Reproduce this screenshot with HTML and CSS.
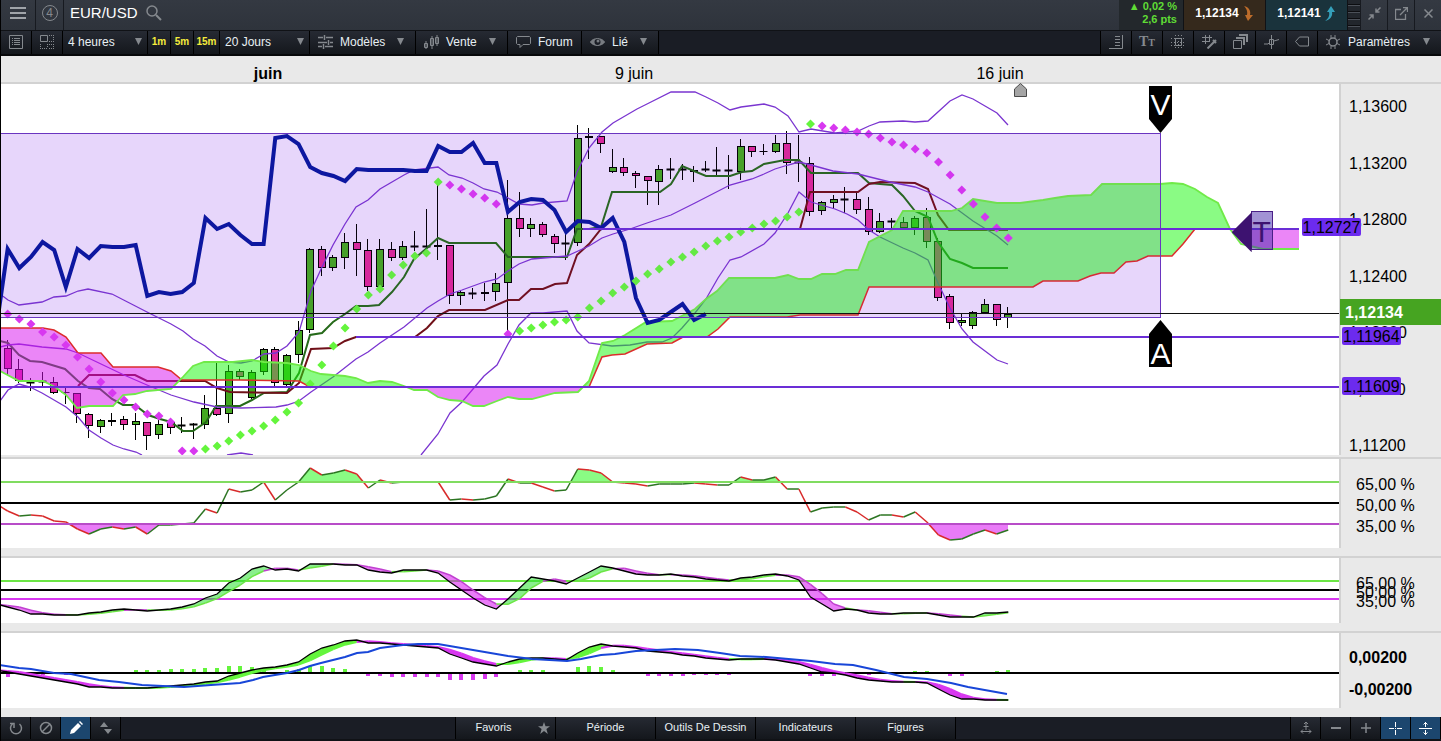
FILE: index.html
```html
<!doctype html>
<html lang="fr">
  <head>
    <meta charset="utf-8" />
    <meta name="viewport" content="width=device-width,initial-scale=1.0" />
    <title>EUR/USD</title>
    <link rel="stylesheet" href="styles.css">
  </head>
  <body>
    <header class="titlebar">
      <button class="tb-btn menu" aria-label="Menu">
        <svg width="16" height="12" viewBox="0 0 16 12"><path d="M0 1h16M0 6h16M0 11h16" stroke-width="2"/></svg>
      </button>
      <button class="tb-btn badge-btn" aria-label="Groupe 4"><span class="badge">4</span></button>
      <h1>EUR/USD</h1>
      <button class="search" aria-label="Rechercher">
        <svg width="16" height="16" viewBox="0 0 16 16"><circle cx="6" cy="6" r="5" stroke-width="1.5"/><path d="M10 10l5 5" stroke-width="2"/></svg>
      </button>
      <div class="change"><span>▲ 0,02 %</span><span>2,6 pts</span></div>
      <button class="quote sell">1,12134
        <svg width="11" height="15" viewBox="0 0 11 15"><path d="M1 0c5 1 7 5 6 9h3l-5 6-3-6h2c1-4-1-7-3-9z"/></svg>
      </button>
      <button class="quote buy">1,12141
        <svg width="11" height="15" viewBox="0 0 11 15"><path d="M0 15c5-1 8-5 7-9h3l-4-6-4 6h2c1 4-1 7-4 9z"/></svg>
      </button>
      <div class="grip"></div>
      <button class="tb-btn" aria-label="Réduire">
        <svg width="13" height="13" viewBox="0 0 13 13"><path d="M12.5 0.5L8 5M8 1.5V5h3.5M0.5 12.5L5 8M1.5 8H5v3.5" stroke-width="1.5"/></svg>
      </button>
      <button class="tb-btn" aria-label="Détacher">
        <svg width="13" height="13" viewBox="0 0 13 13"><path d="M6 2.5H0.5v10h10V7M5 8l7-7M8 0.5h4.5V5" stroke-width="1.3"/></svg>
      </button>
      <button class="tb-btn" aria-label="Fermer">
        <svg width="9" height="9" viewBox="0 0 9 9"><path d="M0.5 0.5l8 8M8.5 0.5l-8 8" stroke-width="1.5"/></svg>
      </button>
    </header>

    <nav class="toolbar">
      <button class="tool" aria-label="Liste">
        <svg width="14" height="14" viewBox="0 0 14 14"><path d="M0.5 0.5h13v13H0.5zM3 3.5h1M5 3.5h6M3 5.5h1M5 5.5h6M3 7.5h1M5 7.5h6M3 9.5h1M5 9.5h6"/></svg>
      </button>
      <button class="tool" aria-label="Disposition">
        <svg width="14" height="14" viewBox="0 0 14 14"><path d="M0.5 0.5h7v6h-7z"/><path d="M9 0.5h5M13.5 2v5M9 6.5h4M0.5 9v5M2 13.5h5M7.5 9v4M9 13.5h5M13.5 9v4M9 9.5h3" stroke-dasharray="1 1"/></svg>
      </button>
      <div class="drop unit">
        <select aria-label="Unité de temps"><option>4 heures</option></select>
        <i class="arrow"></i>
      </div>
      <button class="quick">1m</button>
      <button class="quick">5m</button>
      <button class="quick last">15m</button>
      <div class="drop range">
        <select aria-label="Période affichée"><option>20 Jours</option></select>
        <i class="arrow"></i>
      </div>
      <button class="item models">
        <svg width="15" height="14" viewBox="0 0 15 14"><path d="M0 2.5h5M8 2.5h7M0 7.5h9M12 7.5h3M0 11.5h4M7 11.5h8M6.5 0v5M10.5 5v5M5.5 9v5" stroke-width="1.5"/></svg>
        Modèles<i class="arrow"></i>
      </button>
      <button class="item sale">
        <svg width="15" height="14" viewBox="0 0 15 14"><path d="M0.5 8.5h3v4h-3zM2 6v8M6.5 3.5h3v7h-3zM8 1v13M11.5 2.5h3v6h-3zM13 0v11"/></svg>
        Vente<i class="arrow"></i>
      </button>
      <button class="item forum">
        <svg width="15" height="12" viewBox="0 0 15 12"><path d="M1.5 0.5h12l1 1v6l-1 1H7L4 11.5v-3H1.5l-1-1v-6z"/></svg>
        Forum
      </button>
      <button class="item linked">
        <svg width="15" height="10" viewBox="0 0 15 10"><path d="M0.5 5C3 0.5 12 0.5 14.5 5 12 9.5 3 9.5 0.5 5z" fill="#777b80"/><circle cx="7.5" cy="5" r="3" fill="#1a1d25" stroke="none"/><circle cx="8" cy="4" r="1.5" fill="#777b80" stroke="none"/></svg>
        Lié<i class="arrow"></i>
      </button>
      <span class="spacer"></span>
      <button class="tool" aria-label="Échelle">
        <svg width="14" height="14" viewBox="0 0 14 14"><path d="M13.5 0v13.5H0M6 1.5h5M6 4.5h5M6 7.5h5M6 10.5h5"/></svg>
      </button>
      <button class="tool glyph" aria-label="Texte">T<small>T</small></button>
      <button class="tool" aria-label="Grille">
        <svg width="15" height="14" viewBox="0 0 15 14"><path d="M4.5 0v14M10.5 0v14M0 3.5h15M0 10.5h15M7.5 0v14M0 7.5h15" stroke-dasharray="1 2"/><path d="M4.5 3.5h6v7h-6z"/></svg>
      </button>
      <button class="tool" aria-label="Couleurs de grille">
        <svg width="15" height="14" viewBox="0 0 15 14"><path d="M3.5 0v9M7.5 0v7M0 2.5h10M0 6.5h8"/><path d="M14 5l-5 5M11 5l3 3M5.500 13.500l4-4" stroke-width="2"/></svg>
      </button>
      <button class="tool" aria-label="Calques">
        <svg width="15" height="15" viewBox="0 0 15 15"><path d="M0.5 6.5h8v8h-8z"/><path d="M3 4h8v7M6 1h8v7" stroke-width="2"/></svg>
      </button>
      <button class="tool" aria-label="Bougie">
        <svg width="15" height="14" viewBox="0 0 15 14"><path d="M5.5 4.5h4v5h-4zM7.5 0v14M0 9h4l2-2M10 6l5-1.5"/></svg>
      </button>
      <button class="tool" aria-label="Étiquette">
        <svg width="14" height="12" viewBox="0 0 14 12"><path d="M4.5 1h9v9h-9L0.5 5.5z"/></svg>
      </button>
      <button class="item settings">
        <svg width="14" height="14" viewBox="0 0 14 14"><circle cx="7" cy="7" r="4" stroke-width="1.5"/><path d="M5 0v3M9 0v3M5 11v3M9 11v3M0 4l3 1.5M0 10l3-1.5M14 4l-3 1.5M14 10l-3-1.5"/></svg>
        Paramètres<i class="arrow"></i>
      </button>
    </nav>

    <main>
      <div class="time-axis">
        <span class="tick"><b>juin</b></span>
        <span class="tick">9 juin</span>
        <span class="tick">16 juin</span>
        <svg class="now" width="13" height="14" viewBox="0 0 13 14"><path d="M0.5 6L6.5 0.5l6 5.5v7.5H0.5z"/></svg>
      </div>

      <section class="pane price">
        <div class="plot">
          <svg id="price" viewBox="1 84 1338 371" preserveAspectRatio="none"></svg>
          <span class="marker down">V</span>
          <span class="marker up">A</span>
          <span class="marker-t">T</span>
          <span class="tag inside">1,12727</span>
        </div>
        <div class="axis">
          <span>1,13600</span>
          <span>1,13200</span>
          <span>1,12800</span>
          <span>1,12400</span>
          <span>1,12000</span>
          <span>1,11600</span>
          <span>1,11200</span>
          <strong class="last-price">1,12134</strong>
          <span class="tag first">1,11964</span>
          <span class="tag second">1,11609</span>
        </div>
      </section>

      <section class="pane rsi">
        <div class="plot"><svg id="rsi" viewBox="1 459 1338 89" preserveAspectRatio="none"></svg></div>
        <div class="axis"><span>65,00 %</span><span>50,00 %</span><span>35,00 %</span></div>
      </section>

      <section class="pane stoch">
        <div class="plot"><svg id="stoch" viewBox="1 558 1338 65" preserveAspectRatio="none"></svg></div>
        <div class="axis"><span>65,00 %</span><span>50,00 %</span><span>35,00 %</span></div>
      </section>

      <section class="pane macd">
        <div class="plot"><svg id="macd" viewBox="1 633 1338 75" preserveAspectRatio="none"></svg></div>
        <div class="axis"><b>0,00200</b><b>-0,00200</b></div>
      </section>
    </main>

    <footer class="bottombar">
      <button class="tool" aria-label="Réinitialiser">
        <svg width="14" height="14" viewBox="0 0 14 14"><path d="M3.5 3a5.5 5.5 0 1 0 7 0M1 2.5h4V7" stroke-width="1.5"/></svg>
      </button>
      <button class="tool" aria-label="Effacer">
        <svg width="14" height="14" viewBox="0 0 14 14"><circle cx="7" cy="7" r="5.5" stroke-width="1.5"/><path d="M3 11l8-8" stroke-width="1.5"/></svg>
      </button>
      <button class="tool on" aria-label="Dessiner">
        <svg width="14" height="14" viewBox="0 0 14 14"><path d="M1 13l1-4 7-7 3 3-7 7zM10 1l1-1 3 3-1 1z" fill="#fff" stroke="none"/></svg>
      </button>
      <button class="tool" aria-label="Déplacer">
        <svg width="12" height="12" viewBox="0 0 12 12"><path d="M0 5l4-5 4 5zM4 7h8l-4 5z" fill="#85898e" stroke="none"/></svg>
      </button>
      <span class="spacer"></span>
      <button class="tab starred">Favoris<svg class="star" width="12" height="12" viewBox="0 0 12 12"><path d="M6 0l1.5 4.3H12L8.4 7l1.4 5L6 9l-3.8 3 1.4-5L0 4.3h4.5z"/></svg></button>
      <button class="tab">Période</button>
      <button class="tab">Outils De Dessin</button>
      <button class="tab">Indicateurs</button>
      <button class="tab">Figures</button>
      <span class="spacer"></span>
      <button class="tool" aria-label="Ajuster">
        <svg width="12" height="14" viewBox="0 0 12 14"><path d="M6 1v8M3.5 5.5h5M4 3l2-2 2 2M1 10.5h10M3 8.5l-2 2 2 2M9 8.5l2 2-2 2"/></svg>
      </button>
      <button class="tool" aria-label="Zoom arrière">
        <svg width="10" height="10" viewBox="0 0 10 10"><path d="M0 5h10" stroke-width="2"/></svg>
      </button>
      <button class="tool" aria-label="Zoom avant">
        <svg width="10" height="10" viewBox="0 0 10 10"><path d="M0 5h10M5 0v10" stroke-width="1.5"/></svg>
      </button>
      <button class="tool on" aria-label="Réticule">
        <svg width="13" height="13" viewBox="0 0 13 13"><path d="M0 6.5h5M8 6.5h5M6.5 0v5M6.5 8v5M6 6.5h1"/></svg>
      </button>
      <button class="tool on" aria-label="Ajustement vertical">
        <svg width="13" height="13" viewBox="0 0 13 13"><path d="M0 6.5h13M6.5 0v5M6.5 8v5M4.5 2.5l2-2 2 2M4.5 10.5l2 2 2-2"/></svg>
      </button>
    </footer>

    <script src="chart.js"></script>
  </body>
</html>
```
FILE: styles.css
```css
* {
  box-sizing: border-box;
}

body {
  margin: 0;
  min-height: 100vh;
  display: flex;
  flex-direction: column;
  border-left: 1px solid #000;
  padding-bottom: 2px;
  background: #101216;
  color: #000;
  font-family: "Liberation Sans", Arial, sans-serif;
  font-size: 12px;
}

button,
select {
  margin: 0;
  padding: 0;
  border: none;
  border-radius: 0;
  background: none;
  color: inherit;
  font: inherit;
}

svg {
  fill: none;
  stroke: #85898e;
  flex: none;
}

/* title bar */
.titlebar {
  display: flex;
  align-items: stretch;
  height: 30px;
  background: linear-gradient(#343942, #2e333b);
  color: #fff;
}
.tb-btn {
  width: 27px;
  display: flex;
  align-items: center;
  justify-content: center;
  padding-bottom: 4px;
  border-left: 1px solid #171a20;
}
.menu {
  width: 34px;
  border-left: none;
}
.menu svg {
  stroke: #a0a4a9;
}
.badge-btn {
  width: 28px;
}
.badge {
  width: 16px;
  height: 16px;
  border: 1px solid #85898e;
  border-radius: 50%;
  color: #85898e;
  font-size: 12px;
  line-height: 14px;
}
.titlebar h1 {
  margin: 0;
  padding: 0 8px 0 6px;
  border-left: 1px solid #171a20;
  font-size: 15px;
  font-weight: 400;
  line-height: 26px;
}
.search {
  width: 16px;
  padding-bottom: 4px;
  display: flex;
  align-items: center;
}
.change {
  margin-left: auto;
  width: 64px;
  padding-right: 6px;
  background: #23282c;
  color: #5fdc35;
  font-size: 11px;
  font-weight: 700;
  line-height: 13px;
  text-align: right;
}
.change span {
  display: block;
}
.quote {
  width: 82px;
  padding-bottom: 4px;
  display: flex;
  align-items: center;
  justify-content: center;
  gap: 4px;
  border-left: 1px solid #101216;
  font-weight: 700;
}
.quote svg {
  stroke: none;
}
.sell {
  background: #35291c;
}
.sell svg {
  fill: #bd6c2b;
}
.buy {
  background: #1a333c;
}
.buy svg {
  fill: #35a0ba;
}
.grip {
  width: 13px;
  border-left: 1px solid #101216;
  background: repeating-linear-gradient(#22262c 0 4px, #0c0d10 4px 5px, #4b5058 5px 6px, #22262c 6px 7px);
}

/* tool bars */
.toolbar,
.bottombar {
  display: flex;
  background: #1a1d25;
  color: #e8f0f4;
}
.toolbar {
  height: 26px;
  border-top: 1px solid #101216;
  border-bottom: 2px solid #07080a;
}
.toolbar > *,
.bottombar > * {
  border-right: 1px solid #000;
  background: linear-gradient(#262a33, #14171c);
}
.toolbar > .spacer,
.bottombar > .spacer {
  flex: 1;
  background: none;
}
.toolbar > * {
  padding-bottom: 2px;
}
.toolbar .tool {
  width: 31px;
}
.tool,
.item {
  display: flex;
  align-items: center;
  justify-content: center;
}
.arrow {
  width: 7px;
  height: 7px;
  background: #85898e;
  clip-path: polygon(0 0, 100% 0, 50% 100%);
  pointer-events: none;
}
.drop {
  display: flex;
  align-items: center;
  padding: 0 5px 2px;
}
.drop select {
  flex: 1;
  min-width: 0;
  appearance: none;
  outline: none;
}
.unit {
  width: 85px;
}
.range {
  width: 90px;
}
.quick {
  width: 23px;
  color: #f5ec3c;
  font-size: 10px;
  font-weight: 700;
}
.quick.last {
  width: 26px;
}
.item {
  gap: 7px;
  padding: 0 11px 2px 8px;
  justify-content: flex-start;
}
.item .arrow {
  margin-left: auto;
}
.models {
  width: 106px;
}
.sale {
  width: 92px;
}
.forum {
  width: 74px;
}
.linked {
  width: 77px;
}
.toolbar .settings {
  width: 123px;
  gap: 8px;
  border-right: none;
}
.glyph {
  align-items: baseline;
  padding-top: 3px;
  color: #85898e;
  font-family: "Liberation Serif", serif;
  font-size: 14px;
  font-weight: 700;
}
.glyph small {
  font-size: 10px;
}

/* chart */
main {
  flex: 1;
  display: flex;
  flex-direction: column;
  background: #e9e9e9;
  font-size: 16px;
  line-height: 18px;
}
.time-axis {
  position: relative;
  display: flex;
  height: 26px;
  padding: 9px 0 0 84px;
}
.tick {
  flex: 0 0 366px;
  text-align: center;
}
/* marks the current bar, astride the axis line */
.now {
  position: absolute;
  left: 1013px;
  top: 27px;
  fill: #a5a5a5;
  stroke: #4a4a4a;
  z-index: 1;
}
.pane {
  display: flex;
  border-top: 2px solid #d2d2d2;
}
.price {
  flex: 371 0 373px;
  margin-bottom: 2px;
}
.rsi {
  flex: 89 0 91px;
  margin-bottom: 8px;
}
.stoch {
  flex: 65 0 67px;
  margin-bottom: 8px;
}
.macd {
  flex: 75 0 77px;
  margin-bottom: 9px;
}
.plot {
  position: relative;
  flex: 1;
  min-width: 0;
  background: #fff;
}
.plot > svg {
  position: absolute;
  width: 100%;
  height: 100%;
}
.axis {
  position: relative;
  flex: 0 0 102px;
  display: flex;
  flex-direction: column;
  border-left: 2px solid #d2d2d2;
  padding-left: 8px;
}
.price .axis {
  justify-content: space-between;
  padding-top: 14px;
}
.rsi .axis,
.stoch .axis {
  padding-left: 15px;
}
.rsi .axis {
  padding-top: 15px;
  line-height: 21px;
}
.stoch .axis {
  padding-top: 21px;
  line-height: 9px;
}
.macd .axis {
  padding-top: 9px;
  line-height: 32px;
}

/* labels lying over the chart */
.tag,
.last-price {
  position: absolute;
}
.tag {
  left: 1px;
  height: 18px;
  padding: 0 1px;
  border-radius: 2px;
  background: #6c2bee;
  line-height: 20px;
}
.tag.inside {
  left: 97.2%;
  top: 36%;
  z-index: 1;
}
.tag.first {
  top: 65.5%;
}
.tag.second {
  top: 79%;
}
.last-price {
  left: -1px;
  right: 0;
  top: 58%;
  height: 26px;
  padding-left: 5px;
  background: #46a421;
  color: #fff;
  line-height: 28px;
}
.marker {
  position: absolute;
  left: 85.8%;
  width: 23px;
  height: 47px;
  background: #000;
  color: #fff;
  font-size: 30px;
  text-align: center;
}
.marker.down {
  top: 2px;
  line-height: 38px;
  clip-path: polygon(0 0, 100% 0, 100% 70%, 50% 100%, 0 70%);
}
.marker.up {
  top: 63.6%;
  line-height: 68px;
  clip-path: polygon(50% 0, 100% 30%, 100% 100%, 0 100%, 0 30%);
}
.marker-t {
  position: absolute;
  left: 93.4%;
  top: 34.3%;
  width: 22px;
  height: 39px;
  border: 1px solid #4a1f87;
  background: rgba(70, 40, 170, 0.5);
  color: #3d1270;
  font-size: 30px;
  line-height: 40px;
  text-align: center;
}
.marker-t::before {
  content: "";
  position: absolute;
  left: -20px;
  top: 0;
  width: 20px;
  height: 40px;
  background: #3d1270;
  clip-path: polygon(0 50%, 100% 0, 100% 100%);
}

/* bottom bar */
.bottombar {
  height: 22px;
  font-size: 11px;
}
.bottombar > .tool {
  width: 30px;
}
.bottombar > .tool.on {
  background: #1c466e;
}
.tool.on svg {
  stroke: #fff;
}
.tab {
  position: relative;
  width: 100px;
  padding-bottom: 2px;
}
.tab.starred {
  padding-right: 24px;
}
.star {
  position: absolute;
  right: 5px;
  top: 5px;
  fill: #85898e;
  stroke: none;
}
```
FILE: chart.js
```js
const GREEN = '#64f53c';
const PINK = '#d838f0';
const PURPLE = '#7a35d0';
const STEP = 11.635;
const xAt = (i) => 7.67 + i * STEP;

// [high, body top, body bottom, low, type] with g = up, m = down, d = doji
const candles = `340,348,369,375,m 359,369,381,383,m 378,382,383,391,d 372,381,382,387,d 377,382,393,394,m
388,393,393,404,d 393,393,414,423,m 413,414,426,438,m 419,420,427,433,g 413,420,421,426,g 416,419,425,430,m
413,421,425,440,g 422,422,436,450,m 420,424,435,439,g 419,422,428,434,m 417,425,426,433,d 423,424,425,439,d
395,408,425,429,g 363,408,415,416,m 365,371,414,423,g 369,371,377,380,m 370,372,398,399,g 348,349,372,375,g
347,349,383,388,m 354,355,385,386,g 321,330,355,363,g 248,249,330,333,g 246,249,268,276,m 255,257,268,271,g
233,242,258,269,g 224,242,250,276,m 239,250,287,291,m 239,249,287,289,g 242,249,258,261,m 241,246,258,260,g
231,246,247,251,d 209,246,247,250,d 183,245,247,260,g 245,245,296,304,m 291,292,296,305,g 288,293,294,299,d
283,292,294,301,g 273,283,292,301,g 180,218,283,335,g 192,218,229,237,m 218,224,229,237,g 222,224,235,237,m
234,236,244,253,m 233,243,244,260,d 125,138,243,246,g 128,136,138,159,g 136,136,144,153,m 149,167,172,173,g
158,167,173,176,m 171,173,176,188,m 176,176,181,205,m 165,169,182,205,g 158,169,170,179,d 164,169,170,180,d
166,170,172,182,g 161,169,170,172,d 147,170,171,176,d 155,170,171,189,d 139,146,172,180,g 146,146,152,157,m
144,152,152,155,d 135,143,152,153,g 131,143,163,174,m 135,162,163,182,d 157,163,212,216,m 201,202,211,215,g
195,199,203,209,g 187,199,200,213,d 193,199,210,214,m 197,209,232,235,m 213,221,232,233,g 218,221,222,228,d
217,222,228,228,m 216,218,228,235,g 208,217,242,248,m 238,241,298,301,m 294,296,323,329,m 314,320,323,326,g
311,312,326,329,g 299,304,313,313,g 304,304,320,326,m 307,314,318,328,g`.split(/\s+/).map((c) => {
  const [high, top, bottom, low, type] = c.split(',');
  return { high: +high, top: +top, bottom: +bottom, low: +low, type };
});

const tenkan = '0,341 8,343 19,355 30,361 42,362 65,369 78,381 89,388 100,389 112,399 123,405 135,405 148,415 160,419 171,422 183,431 193,431 206,422 216,406 240,406 252,400 264,393 287,392 299,373 310,335 322,333 333,322 345,314 356,306 368,306 379,305 392,292 404,277 414,259 427,248 438,238 449,243 496,243 508,257 567,257 577,229 589,229 601,227 612,192 660,192 671,184 682,166 706,176 730,176 742,172 752,171 764,164 785,160 799,160 811,173 858,173 869,183 880,184 892,185 903,196 915,211 928,217 938,242 950,259 962,263 973,268 1008,268';
const kijun = '78,386 89,375 135,375 147,381 205,381 217,388 230,392 287,393 299,383 311,349 333,348 345,341 356,337 415,337 427,328 438,316 449,310 485,310 508,300 519,300 531,289 543,289 555,284 567,283 577,255 589,244 601,229 800,229 810,192 858,192 869,184 880,182 915,183 928,189 938,215 949,230 1008,230';
const bands = [
  '0,294 8,300 19,305 42,302 54,297 66,296 78,291 88,289 112,294 147,312 171,324 183,331 193,339 205,346 217,356 229,362 241,363 252,361 264,354 276,353 287,346 299,332 311,291 322,267 333,245 345,224 356,207 368,200 380,189 404,175 414,170 438,167 449,175 462,178 473,183 484,189 497,192 508,198 519,204 532,205 543,203 567,201 577,172 589,148 602,132 613,123 637,109 647,104 671,92 695,92 706,97 718,103 730,110 741,107 764,104 775,107 788,116 799,132 811,129 835,133 858,131 869,126 880,122 903,121 915,122 928,121 950,101 962,95 973,99 997,113 1008,125',
  '0,347 8,345 19,344 42,347 66,349 78,353 101,364 124,375 147,385 171,395 194,402 217,407 241,408 276,407 287,405 299,401 311,392 333,377 356,359 368,352 380,343 404,327 427,308 438,301 450,294 462,290 484,282 497,279 508,271 519,264 532,259 555,257 567,256 589,246 602,238 613,234 630,229 647,223 671,215 695,203 730,185 752,179 764,174 775,169 788,165 799,162 811,165 833,171 858,174 890,182 915,187 928,192 950,204 973,221 997,236 1008,245',
  '0,401 8,390 19,384 30,387 42,393 66,407 78,417 89,430 101,438 113,445 124,449 136,452 142,455',
  '227,455 241,453 253,455',
  '421,455 438,434 450,413 462,402 473,389 484,376 497,365 508,344 519,325 531,313 543,313 567,311 577,331 589,343 612,346 630,345 647,342 662,342 672,338 682,328 695,313 706,299 718,278 730,260 741,257 764,244 775,233 788,213 799,192 811,202 835,209 847,214 858,220 869,230 880,237 903,248 915,253 928,260 938,283 950,308 962,329 973,342 997,360 1008,364',
];
const spanA = '0,371 19,381 43,381 55,387 66,395 77,408 89,406 113,406 123,395 135,394 147,391 171,389 182,378 193,366 204,362 233,362 252,360 264,362 287,363 299,365 311,371 321,374 345,376 356,378 368,383 380,381 392,382 404,386 414,390 427,390 438,397 450,400 462,401 473,406 484,406 497,401 508,397 519,399 532,399 555,393 578,392 589,381 602,343 613,341 625,335 646,322 672,321 695,309 706,299 717,291 729,278 775,278 788,275 799,279 811,279 822,274 835,274 846,270 858,270 869,242 892,230 903,211 951,211 962,208 973,199 997,203 1020,203 1043,200 1055,198 1068,196 1091,195 1102,184 1160,184 1172,183 1183,184 1195,189 1207,197 1218,203 1230,229 1241,244 1250,246 1263,249 1299,249';
const spanB = '0,328 43,328 54,330 66,337 78,353 101,353 113,367 158,367 171,371 182,380 240,380 299,381 310,387 589,387 602,357 612,355 625,354 647,344 672,343 683,337 707,337 718,329 730,317 787,317 800,315 858,315 869,287 1033,287 1043,281 1078,281 1090,276 1101,273 1114,273 1126,262 1137,261 1148,256 1172,256 1183,244 1195,229 1299,229';

const sar = [314, 319, 324, 332, 337, 345, 357, 369, 382, 393, 400, 407, 414, 416, 422, 451, 451, 449, 446, 441, 435, 431, 426, 420, 412, 403, 384, 365, 346, 328, 309, 295, 289, 275, 265, 256, 253, 182, 185, 189, 194, 198, 204, 334, 331, 328, 325, 322, 320, 317, 308, 301, 293, 287, 281, 274, 269, 262, 257, 252, 246, 241, 237, 232, 228, 224, 221, 217, 212, 124, 126, 128, 130, 132, 134, 138, 142, 145, 149, 153, 162, 175, 190, 204, 217, 228, 238];
const sarDown = (i) => i < 17 || (i > 37 && i < 44) || i > 69;

const rsi = [504, 511, 516, 515, 516, 521, 522, 529, 534, 529, 527, 529, 527, 534, 525, 525, 524, 523, 509, 513, 489, 492, 490, 482, 500, 490, 482, 468, 475, 473, 470, 474, 488, 480, 483, 482, 482, 482, 482, 500, 499, 500, 499, 496, 479, 483, 483, 487, 491, 490, 469, 470, 473, 482, 483, 484, 486, 484, 484, 484, 483, 484, 485, 485, 477, 480, 480, 477, 489, 489, 512, 508, 507, 507, 512, 520, 515, 515, 517, 512, 522, 535, 540, 539, 534, 530, 534, 530];
const stoch = [604, 607, 610, 614, 614, 615, 615, 615, 613, 612, 610, 609, 610, 611, 610, 609, 607, 604, 598, 594, 583, 578, 569, 566, 570, 569, 571, 564, 564, 564, 565, 565, 570, 572, 573, 570, 570, 570, 573, 582, 590, 598, 605, 609, 599, 588, 577, 579, 581, 584, 578, 572, 566, 568, 571, 574, 575, 575, 574, 576, 577, 579, 580, 581, 578, 577, 575, 574, 576, 580, 597, 604, 611, 609, 610, 613, 614, 614, 613, 613, 613, 615, 617, 617, 617, 613, 613, 612];
const macd = [670, 672, 674, 676, 678, 680, 682, 684, 687, 687, 688, 688, 688, 688, 687, 686, 685, 684, 682, 681, 676, 673, 670, 668, 667, 665, 662, 654, 648, 645, 641, 640, 643, 643, 644, 645, 646, 647, 648, 654, 658, 662, 664, 666, 662, 659, 658, 658, 659, 660, 653, 647, 644, 646, 647, 648, 651, 652, 653, 655, 656, 658, 659, 660, 659, 659, 659, 660, 662, 664, 668, 672, 673, 675, 678, 680, 681, 682, 682, 682, 683, 689, 695, 699, 699, 700, 700, 700];
const signal = '0,665 19,668 31,669 54,673 71,674 99,680 119,682 142,685 184,687 211,685 240,683 253,680 263,677 287,673 299,670 310,666 321,663 345,657 357,653 368,652 380,648 403,645 418,644 438,644 473,650 508,656 532,659 567,661 581,659 601,655 615,654 636,651 675,649 698,650 720,653 740,656 766,657 811,661 835,664 853,665 876,670 892,674 904,677 927,679 951,683 968,687 1007,694';
const histogram = { 0: -3, 3: -1, 5: -1, 11: 2, 12: 2, 13: 2, 14: 3, 15: 3, 16: 3, 17: 4, 18: 4, 19: 6, 20: 6, 21: 5, 22: 3, 24: 2, 25: 3, 26: 6, 27: 6, 28: 4, 29: 3, 31: -2, 32: -2, 33: -3, 34: -3, 35: -3, 36: -3, 37: -3, 38: -6, 39: -6, 40: -6, 41: -5, 42: -3, 44: 2, 45: 2, 46: 2, 49: 5, 50: 6, 51: 5, 52: 2, 55: -2, 56: -2, 57: -2, 58: -2, 59: -1, 60: -1, 61: -1, 62: -1, 69: -2, 70: -2, 71: -2, 74: -1, 78: 1, 79: 1, 81: -2, 82: -2, 85: 1, 86: 2 };

const parse = (s) => s.split(' ').map((p) => p.split(',').map(Number));
// indicator series start one bar before the first visible candle
const series = (values) => values.map((y, i) => [xAt(i - 1), y]);
const average = (values, n) => values.map((v, i) => {
  const part = values.slice(Math.max(0, i - n + 1), i + 1);
  return part.reduce((a, b) => a + b, 0) / part.length;
});

function add(id, tag, attrs) {
  const el = document.createElementNS('http://www.w3.org/2000/svg', tag);
  for (const key in attrs) el.setAttribute(key, attrs[key]);
  document.getElementById(id).appendChild(el);
}

function line(id, points, stroke, width) {
  add(id, 'polyline', { points: points.join(' '), stroke, 'stroke-width': width });
}

function hline(id, x1, x2, y, stroke, width) {
  add(id, 'line', { x1, x2, y1: y, y2: y, stroke, 'stroke-width': width });
}

function valueAt(points, x) {
  for (let i = 1; i < points.length; i++) {
    const [x0, y0] = points[i - 1];
    const [x1, y1] = points[i];
    if (x <= x1) return y0 + ((y1 - y0) * (x - x0)) / (x1 - x0);
  }
  return points[points.length - 1][1];
}

// area between a and b, one colour where a is above b and another where it is below
function between(id, a, b, above, below, opacity) {
  const end = Math.floor(a[a.length - 1][0]);
  let run = [];
  let side = null;
  const flush = () => {
    const color = side ? above : below;
    if (run.length > 1 && color) {
      const top = run.map((r) => [r[0], r[1]]);
      const bottom = run.map((r) => [r[0], r[2]]).reverse();
      add(id, 'polygon', { points: top.concat(bottom).join(' '), fill: color, 'fill-opacity': opacity, stroke: 'none' });
    }
  };
  for (let x = 0; x <= end; x++) {
    const p = [x, valueAt(a, x), valueAt(b, x)];
    const now = p[1] <= p[2];
    if (side !== null && now !== side) {
      run.push(p);
      flush();
      run = [];
    }
    side = now;
    run.push(p);
  }
  flush();
}

// price pane
const zone = { x: 0, y: 133.5, width: 1160.5, height: 184 };
add('price', 'rect', { ...zone, fill: 'rgba(125, 20, 230, 0.13)', stroke: 'none' });

candles.forEach((c, i) => {
  const x = Math.round(xAt(i)) - 0.5;
  add('price', 'path', { d: `M${x} ${c.high}V${c.low}`, stroke: '#000', 'stroke-width': 1 });
  if (c.type === 'd') {
    add('price', 'path', { d: `M${x - 4} ${c.bottom - 0.5}H${x + 4}`, stroke: '#000', 'stroke-width': c.top === c.bottom ? 1 : 2 });
  } else {
    add('price', 'rect', {
      x: x - 3, y: c.top + 0.5, width: 7, height: Math.max(1, c.bottom - c.top - 1),
      fill: c.type === 'g' ? '#44a820' : '#dc2a98', stroke: '#000', 'stroke-width': 1,
    });
  }
});

line('price', parse(tenkan), '#266a1a', 2);
line('price', parse(kijun), '#701018', 2);
bands.forEach((b) => line('price', parse(b), PURPLE, 1.3));

const a = parse(spanA);
const b = parse(spanB);
between('price', a, b, '#15f709', '#d70ef0', 0.5);
line('price', b, '#dc2c2c', 1.5);
line('price', a, '#70ea48', 1.8);

// lagging line: the close moved 26 bars back
const close = (c) => (c.type === 'g' ? c.top : c.bottom);
line('price', candles.slice(25).map((c, i) => [xAt(i - 1), close(c)]), '#08189c', 4);

sar.forEach((y, i) => {
  const x = xAt(i);
  add('price', 'path', { d: `M${x} ${y - 4.5}l4.5 4.5-4.5 4.5-4.5-4.5z`, fill: sarDown(i) ? PINK : GREEN, stroke: 'none' });
});

add('price', 'rect', { ...zone, fill: 'rgba(125, 20, 230, 0.05)', stroke: '#6a35c0', 'stroke-width': 1 });
hline('price', 0, 1339, 313.5, '#111', 1);
hline('price', 583, 1299, 229, '#6b2ed6', 2);
hline('price', 356, 1339, 337, '#6b2ed6', 2);
hline('price', 0, 1339, 387, '#6b2ed6', 2);

// rsi pane
const r = series(rsi);
between('rsi', r, [[0, 482], [1340, 482]], '#15f709', null, 0.5);
between('rsi', r, [[0, 524], [1340, 524]], null, '#d70ef0', 0.55);
for (let i = 1; i < r.length; i++) {
  line('rsi', [r[i - 1], r[i]], r[i][1] > r[i - 1][1] ? '#d82a2a' : '#2c7522', 1.5);
}
hline('rsi', 0, 1339, 482, '#80dc60', 2);
hline('rsi', 0, 1339, 503, '#000', 2);
hline('rsi', 0, 1339, 524, '#b84cc8', 2);

// stochastic pane
const k = series(stoch);
const d = series(average(stoch, 3));
hline('stoch', 0, 1339, 581, '#6ce645', 2);
hline('stoch', 0, 1339, 590, '#000', 2);
hline('stoch', 0, 1339, 599, PINK, 2);
between('stoch', k, d, '#2ae030', '#d70ef0', 0.55);
for (let i = 1; i < d.length; i++) {
  line('stoch', [d[i - 1], d[i]], k[i][1] <= d[i][1] ? '#6ce645' : '#c040d0', 1.5);
}
line('stoch', k, '#000', 1.3);

// macd pane
const m = series(macd);
const fast = series(average(macd, 3));
for (const i in histogram) {
  const h = histogram[i];
  add('macd', 'rect', { x: Math.round(xAt(+i)) - 2, y: h > 0 ? 672 - h : 674, width: 4, height: Math.abs(h), fill: h > 0 ? GREEN : PINK, stroke: 'none' });
}
hline('macd', 0, 1339, 673, '#000', 2);
between('macd', m, fast, GREEN, PINK, 1);
for (let i = 1; i < fast.length; i++) {
  line('macd', [fast[i - 1], fast[i]], m[i][1] <= fast[i][1] ? GREEN : PINK, 2);
}
line('macd', m, '#000', 1.3);
line('macd', parse(signal), '#1846d8', 2);
```
